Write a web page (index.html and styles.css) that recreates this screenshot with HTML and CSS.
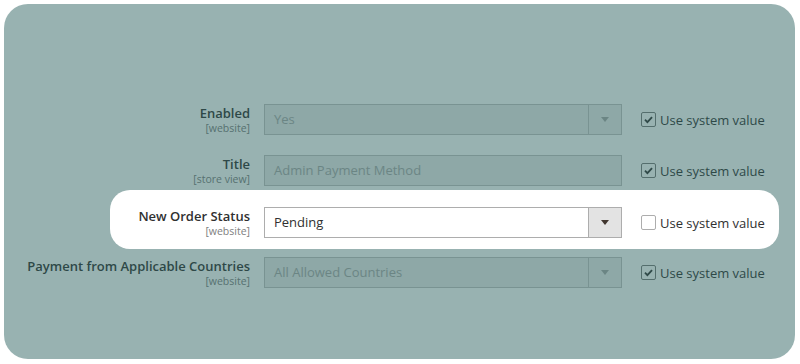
FILE: index.html
```html
<!DOCTYPE html>
<html>
<head>
<meta charset="utf-8">
<link rel="stylesheet" href="styles.css">
</head>
<body>
<div class="card">
  <div class="dim"></div>
  <div class="rows">
    <div class="row">
      <div class="label"><span class="name">Enabled</span><span class="scope">[website]</span></div>
      <div class="field disabled"><span class="value">Yes</span><span class="btn"><span class="arrow"></span></span></div>
      <label class="sys"><span class="cb checked"><svg viewBox="0 0 14 14"><path d="M3.2 7.2 L5.8 9.8 L10.8 4.4" fill="none" stroke="#333" stroke-width="2"/></svg></span>Use system value</label>
    </div>
    <div class="row">
      <div class="label"><span class="name">Title</span><span class="scope">[store view]</span></div>
      <div class="field disabled"><span class="value">Admin Payment Method</span></div>
      <label class="sys"><span class="cb checked"><svg viewBox="0 0 14 14"><path d="M3.2 7.2 L5.8 9.8 L10.8 4.4" fill="none" stroke="#333" stroke-width="2"/></svg></span>Use system value</label>
    </div>
    <div class="spot">
      <div class="row">
        <div class="label"><span class="name">New Order Status</span><span class="scope">[website]</span></div>
        <div class="field"><span class="value">Pending</span><span class="btn"><span class="arrow"></span></span></div>
        <label class="sys"><span class="cb"></span>Use system value</label>
      </div>
    </div>
    <div class="row">
      <div class="label"><span class="name">Payment from Applicable Countries</span><span class="scope">[website]</span></div>
      <div class="field disabled"><span class="value">All Allowed Countries</span><span class="btn"><span class="arrow"></span></span></div>
      <label class="sys"><span class="cb checked"><svg viewBox="0 0 14 14"><path d="M3.2 7.2 L5.8 9.8 L10.8 4.4" fill="none" stroke="#333" stroke-width="2"/></svg></span>Use system value</label>
    </div>
  </div>
</div>
</body>
</html>
```

FILE: styles.css
```css
* { box-sizing: border-box; }
html, body { margin: 0; padding: 0; background: #ffffff; }
body {
  font-family: "Open Sans", "Noto Sans", sans-serif;
  color: #303030;
  width: 800px;
  height: 364px;
  overflow: hidden;
}
.card {
  position: relative;
  margin: 4px 0 0 4px;
  width: 791px;
  height: 355px;
  border-radius: 24px;
  overflow: hidden;
  background: #ffffff;
}
.dim {
  position: absolute;
  inset: 0;
  background: rgba(44, 97, 95, 0.49);
  z-index: 1;
}
.rows {
  padding-top: 100px;
  display: flex;
  flex-direction: column;
}
.row {
  --label: 246px;
  display: grid;
  grid-template-columns: var(--label) 358px auto;
  column-gap: 14px;
  align-items: start;
  height: 31px;
  margin-bottom: 20px;
}
.rows > .row:nth-child(2) { margin-bottom: 4px; }
.spot {
  position: relative;
  z-index: 2;
  background: #ffffff;
  border-radius: 20px;
  margin: 0 16px 8px 106px;
  padding: 17px 0 11px 0;
}
.spot .row { --label: 140px; margin-bottom: 0; }
.label {
  display: flex;
  flex-direction: column;
  align-items: flex-end;
  text-align: right;
  padding-top: 0;
}
.name {
  font-weight: 600;
  font-size: 13px;
  line-height: 18px;
  color: #303030;
}
.scope {
  font-size: 10.5px;
  line-height: 12px;
  color: #808080;
}
.field {
  display: flex;
  align-items: stretch;
  height: 31px;
  border: 1px solid #adadad;
  background: #ffffff;
}
.field.disabled {
  background: #ebebeb;
  border-color: #c2c2c2;
}
.value {
  flex: 1;
  padding-left: 9px;
  font-size: 13px;
  line-height: 29px;
  color: #303030;
}
.disabled .value { color: #a8a8a8; }
.btn {
  width: 33px;
  border-left: 1px solid #adadad;
  background: #e3e3e3;
  display: flex;
  align-items: center;
  justify-content: center;
}
.disabled .btn { background: #ebebeb; border-left-color: #c2c2c2; }
.arrow {
  width: 0;
  height: 0;
  border-left: 4.5px solid transparent;
  border-right: 4.5px solid transparent;
  border-top: 5px solid #41362f;
}
.disabled .arrow { border-top-color: #a8a8a8; }
.sys {
  display: flex;
  align-items: center;
  height: 31px;
  margin-left: 5px;
  font-size: 13px;
  color: #303030;
  white-space: nowrap;
}
.cb {
  width: 15px;
  height: 15px;
  border: 1px solid #adadad;
  border-radius: 2px;
  background: #ffffff;
  margin-right: 4px;
  display: flex;
}
.cb svg { width: 13px; height: 13px; }
.cb.checked { border-color: #7a7a7a; }
```
